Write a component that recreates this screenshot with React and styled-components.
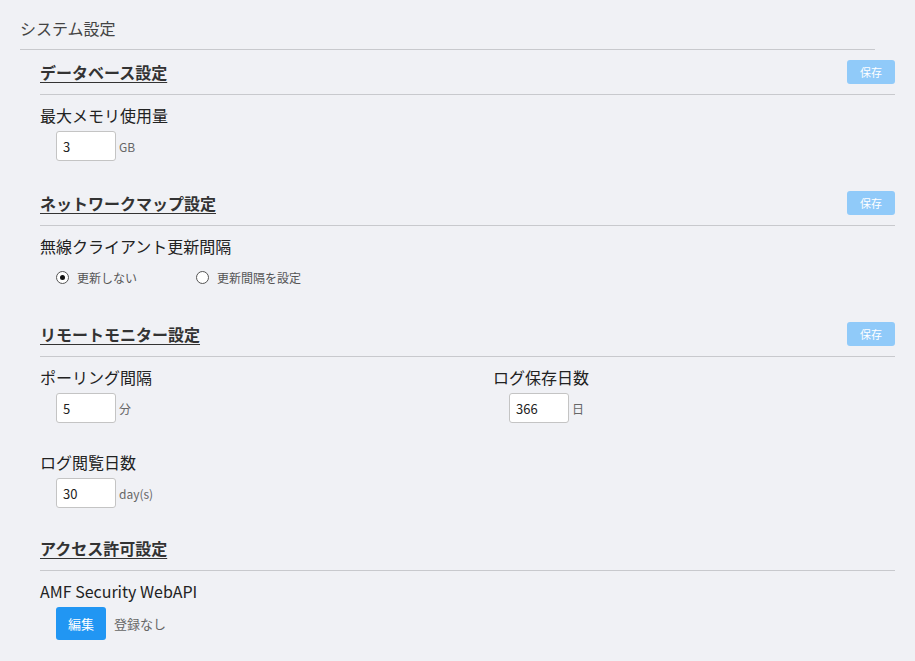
import React from "react";
import styled, { createGlobalStyle } from "styled-components";

const GlobalStyle = createGlobalStyle`
  html, body { margin: 0; padding: 0; background: #f0f1f5; }
  body { font-family: "Noto Sans CJK JP", "Noto Sans", sans-serif; color: #222; }
`;

const Page = styled.div`
  padding: 0 40px 20px 20px;
  min-height: 661px;
  box-sizing: border-box;
`;

const Title = styled.h1`
  margin: 0;
  padding: 16px 0 9px;
  font-size: 16px;
  line-height: 24px;
  font-weight: 400;
  color: #444;
  border-bottom: 1px solid #c8c9cd;
`;

const Sections = styled.div`
  margin: 0 -20px 0 20px;
`;

const Section = styled.section`
  margin-top: ${(p) => p.$mt || "20px"};
`;

const SectionHead = styled.div`
  display: flex;
  align-items: center;
  justify-content: space-between;
  height: 24px;
  padding: 10px 0;
  border-bottom: 1px solid #c8c9cd;
`;

const SectionTitle = styled.h2`
  margin: 0;
  font-size: 16px;
  line-height: 24px;
  font-weight: 700;
  color: #333;
  text-decoration: underline;
  text-underline-offset: 3px;
`;

const SaveButton = styled.button`
  width: 48px;
  height: 24px;
  border: none;
  border-radius: 3px;
  background: #90caf9;
  color: #fff;
  font-family: inherit;
  font-size: 11px;
  padding: 0;
`;

const Fields = styled.div`
  display: grid;
  grid-template-columns: ${(p) => (p.$cols === 2 ? "453px 1fr" : "1fr")};
  row-gap: 27px;
  margin-top: 8px;
`;

const Field = styled.div``;

const Label = styled.div`
  font-size: 16px;
  line-height: 24px;
  color: #222;
`;

const Controls = styled.div`
  display: flex;
  align-items: center;
  margin: 4px 0 0 16px;
  min-height: 30px;
  gap: ${(p) => p.$gap || "3px"};
`;

const Input = styled.input`
  width: 60px;
  height: 30px;
  box-sizing: border-box;
  border: 1px solid #c4c4c4;
  border-radius: 3px;
  background: #fff;
  padding: 0 6px;
  font-family: inherit;
  font-size: 13px;
  color: #222;
`;

const Unit = styled.span`
  font-size: 12px;
  color: #666;
`;

const RadioOption = styled.label`
  display: inline-flex;
  align-items: center;
  gap: 8px;
  font-size: 12px;
  color: #555;
  margin-right: ${(p) => p.$mr || "0"};
`;

const RadioCircle = styled.span`
  width: 11px;
  height: 11px;
  border: 1px solid #555;
  border-radius: 50%;
  background: #fff;
  display: inline-flex;
  align-items: center;
  justify-content: center;
  &::after {
    content: "";
    width: 5px;
    height: 5px;
    border-radius: 50%;
    background: ${(p) => (p.$checked ? "#111" : "transparent")};
  }
`;

const EditButton = styled.button`
  width: 50px;
  height: 33px;
  border: none;
  border-radius: 3px;
  background: #2196f3;
  color: #fff;
  font-family: inherit;
  font-size: 13px;
  padding: 0;
`;

const Note = styled.span`
  font-size: 13px;
  color: #666;
  margin-left: 5px;
`;

export default function App() {
  return (
    <>
      <GlobalStyle />
      <Page>
        <Title>システム設定</Title>
        <Sections>
          <Section $mt="0">
            <SectionHead>
              <SectionTitle>データベース設定</SectionTitle>
              <SaveButton>保存</SaveButton>
            </SectionHead>
            <Fields>
              <Field>
                <Label>最大メモリ使用量</Label>
                <Controls>
                  <Input defaultValue="3" />
                  <Unit>GB</Unit>
                </Controls>
              </Field>
            </Fields>
          </Section>

          <Section>
            <SectionHead>
              <SectionTitle>ネットワークマップ設定</SectionTitle>
              <SaveButton>保存</SaveButton>
            </SectionHead>
            <Fields>
              <Field>
                <Label>無線クライアント更新間隔</Label>
                <Controls $gap="0">
                  <RadioOption $mr="59px">
                    <RadioCircle $checked />
                    更新しない
                  </RadioOption>
                  <RadioOption>
                    <RadioCircle />
                    更新間隔を設定
                  </RadioOption>
                </Controls>
              </Field>
            </Fields>
          </Section>

          <Section>
            <SectionHead>
              <SectionTitle>リモートモニター設定</SectionTitle>
              <SaveButton>保存</SaveButton>
            </SectionHead>
            <Fields $cols={2}>
              <Field>
                <Label>ポーリング間隔</Label>
                <Controls>
                  <Input defaultValue="5" />
                  <Unit>分</Unit>
                </Controls>
              </Field>
              <Field>
                <Label>ログ保存日数</Label>
                <Controls>
                  <Input defaultValue="366" />
                  <Unit>日</Unit>
                </Controls>
              </Field>
              <Field>
                <Label>ログ閲覧日数</Label>
                <Controls>
                  <Input defaultValue="30" />
                  <Unit>day(s)</Unit>
                </Controls>
              </Field>
            </Fields>
          </Section>

          <Section $mt="18px">
            <SectionHead>
              <SectionTitle>アクセス許可設定</SectionTitle>
            </SectionHead>
            <Fields>
              <Field>
                <Label>AMF Security WebAPI</Label>
                <Controls>
                  <EditButton>編集</EditButton>
                  <Note>登録なし</Note>
                </Controls>
              </Field>
            </Fields>
          </Section>
        </Sections>
      </Page>
    </>
  );
}
